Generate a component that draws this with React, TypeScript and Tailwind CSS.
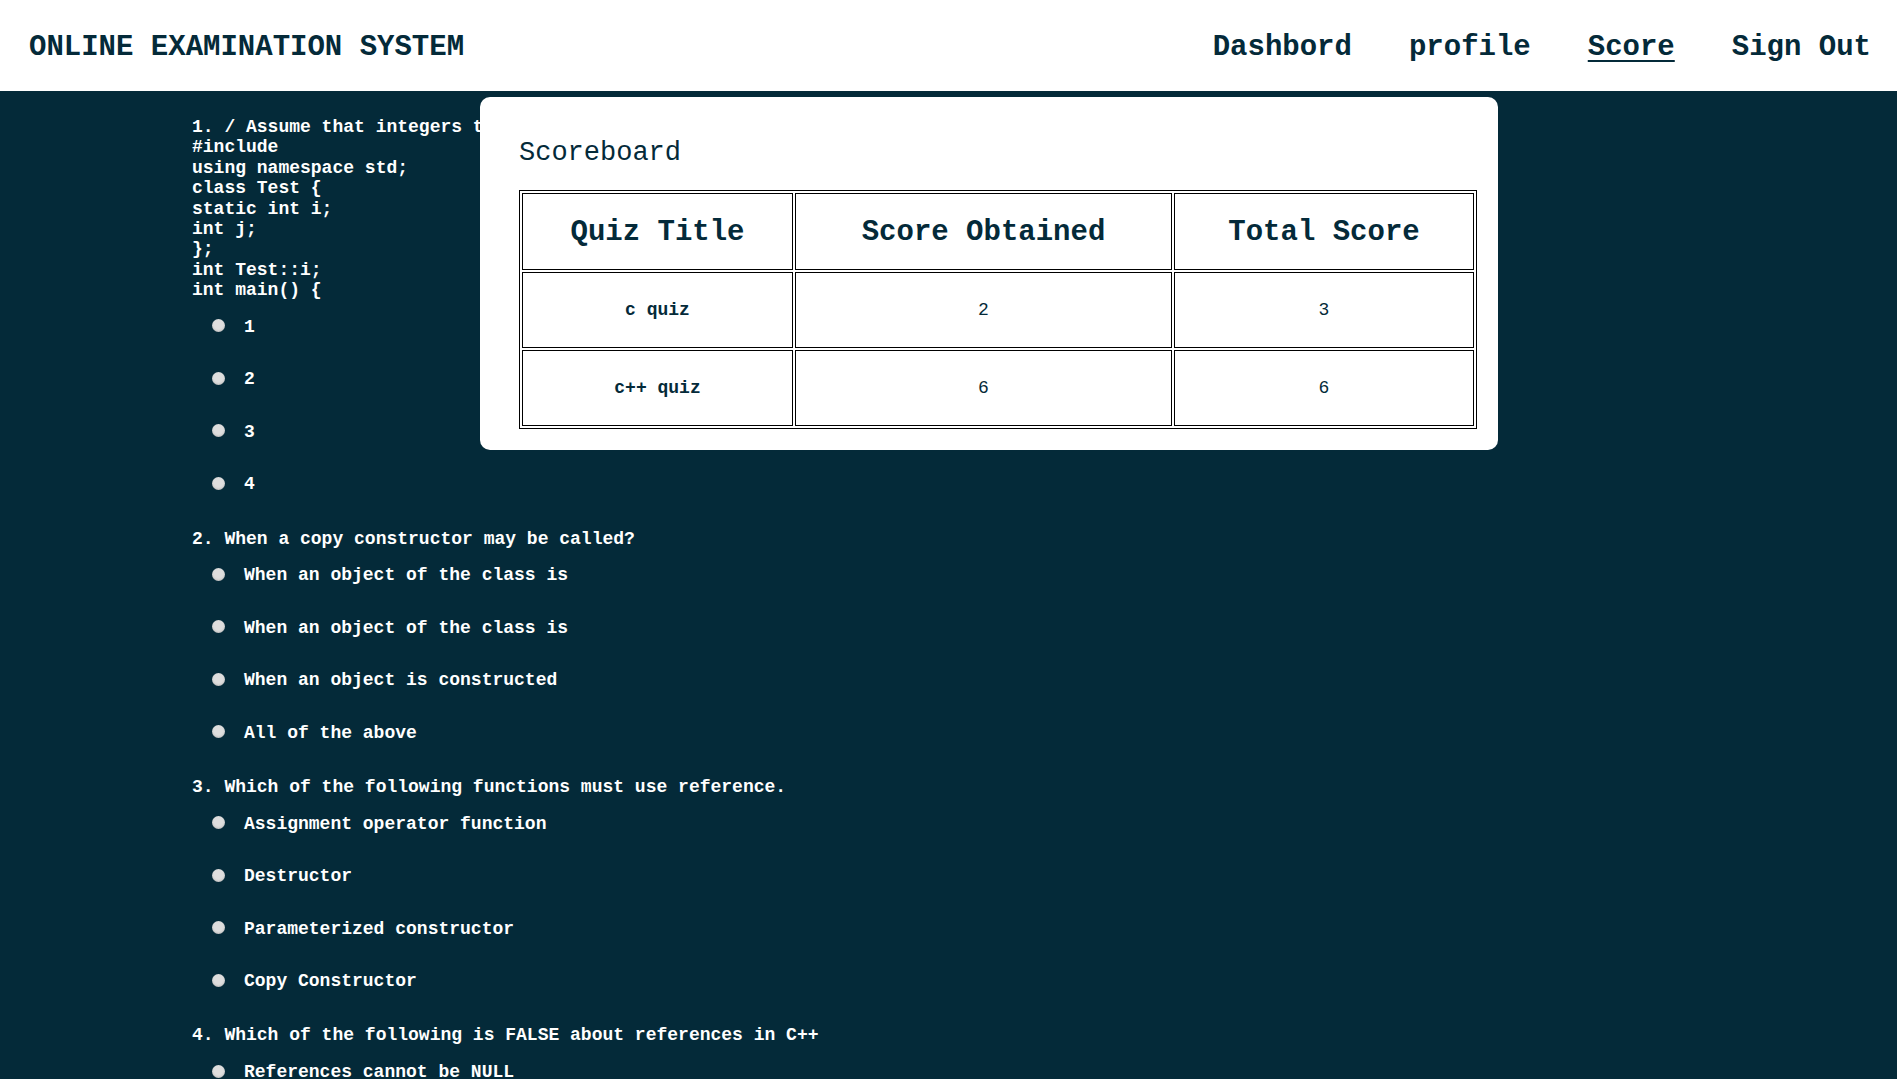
import React from "react";

type Question = {
    lines: string[];
    options: string[];
};

const questions: Question[] = [
    {
        lines: [
            "1. / Assume that integers take 4 bytes.",
            "#include",
            "using namespace std;",
            "class Test {",
            "static int i;",
            "int j;",
            "};",
            "int Test::i;",
            "int main() {",
        ],
        options: ["1", "2", "3", "4"],
    },
    {
        lines: ["2. When a copy constructor may be called?"],
        options: [
            "When an object of the class is",
            "When an object of the class is",
            "When an object is constructed",
            "All of the above",
        ],
    },
    {
        lines: ["3. Which of the following functions must use reference."],
        options: [
            "Assignment operator function",
            "Destructor",
            "Parameterized constructor",
            "Copy Constructor",
        ],
    },
    {
        lines: ["4. Which of the following is FALSE about references in C++"],
        options: [
            "References cannot be NULL",
            "A reference must be initialized when declared",
            "Once a reference is created, it cannot be later made to reference another object",
            "References cannot refer to constant value",
        ],
    },
];

const scores = [
    { title: "c quiz", obtained: 2, total: 3 },
    { title: "c++ quiz", obtained: 6, total: 6 },
];

export default function App() {
    return (
        <div className="relative min-h-screen bg-[#042a39] font-['Liberation_Mono','Courier_New',monospace] text-[#042a39]">
            {/* header */}
            <header className="h-[91px] bg-white flex items-center justify-between pl-[29px] pr-[26px] pt-[5px]">
                <h1 className="text-[29px] leading-[1.133] font-bold">ONLINE EXAMINATION SYSTEM</h1>
                <nav className="flex items-center gap-[57px] text-[29px] leading-[1.133] font-bold">
                    <a href="#">Dashbord</a>
                    <a href="#">profile</a>
                    <a href="#" className="underline underline-offset-[5px]">Score</a>
                    <a href="#">Sign Out</a>
                </nav>
            </header>

            {/* questions */}
            <main className="pl-[192px] pt-[26px] text-white font-bold text-[18px] leading-[20.4px]">
                {questions.map((q, qi) => (
                    <div key={qi} className={qi > 0 ? "mt-[18px]" : ""}>
                        <div>
                            {q.lines.map((line, li) => (
                                <p key={li} className="whitespace-pre">{line}</p>
                            ))}
                        </div>
                        <ul>
                            {q.options.map((opt, oi) => (
                                <li key={oi} className="h-[52.5px] flex items-center pl-[20px] gap-[19px]">
                                    <span className="w-[13px] h-[13px] rounded-full bg-[#dedede] shadow-[inset_0_-1px_2px_rgba(0,0,0,0.15)] -translate-y-[1px]" />
                                    <span className="whitespace-pre">{opt}</span>
                                </li>
                            ))}
                        </ul>
                    </div>
                ))}
            </main>

            {/* scoreboard popup */}
            <div className="absolute left-[480px] top-[97px] w-[1018px] h-[353px] bg-white rounded-[10px] pl-[39px] pt-[41px]">
                <h2 className="text-[27px] leading-[1.133] font-normal">Scoreboard</h2>
                <table className="mt-[21px] border border-black border-separate border-spacing-[2px] text-center">
                    <thead>
                        <tr>
                            <th className="w-[271px] h-[77px] border border-black text-[29px] font-bold pt-[3px]">Quiz Title</th>
                            <th className="w-[377px] h-[77px] border border-black text-[29px] font-bold pt-[3px]">Score Obtained</th>
                            <th className="w-[300px] h-[77px] border border-black text-[29px] font-bold pt-[3px]">Total Score</th>
                        </tr>
                    </thead>
                    <tbody>
                        {scores.map((s, i) => (
                            <tr key={i}>
                                <td className="h-[76px] border border-black text-[18px] font-bold pt-[1px]">{s.title}</td>
                                <td className="h-[76px] border border-black text-[18px] pt-[1px]">{s.obtained}</td>
                                <td className="h-[76px] border border-black text-[18px] pt-[1px]">{s.total}</td>
                            </tr>
                        ))}
                    </tbody>
                </table>
            </div>
        </div>
    );
}
